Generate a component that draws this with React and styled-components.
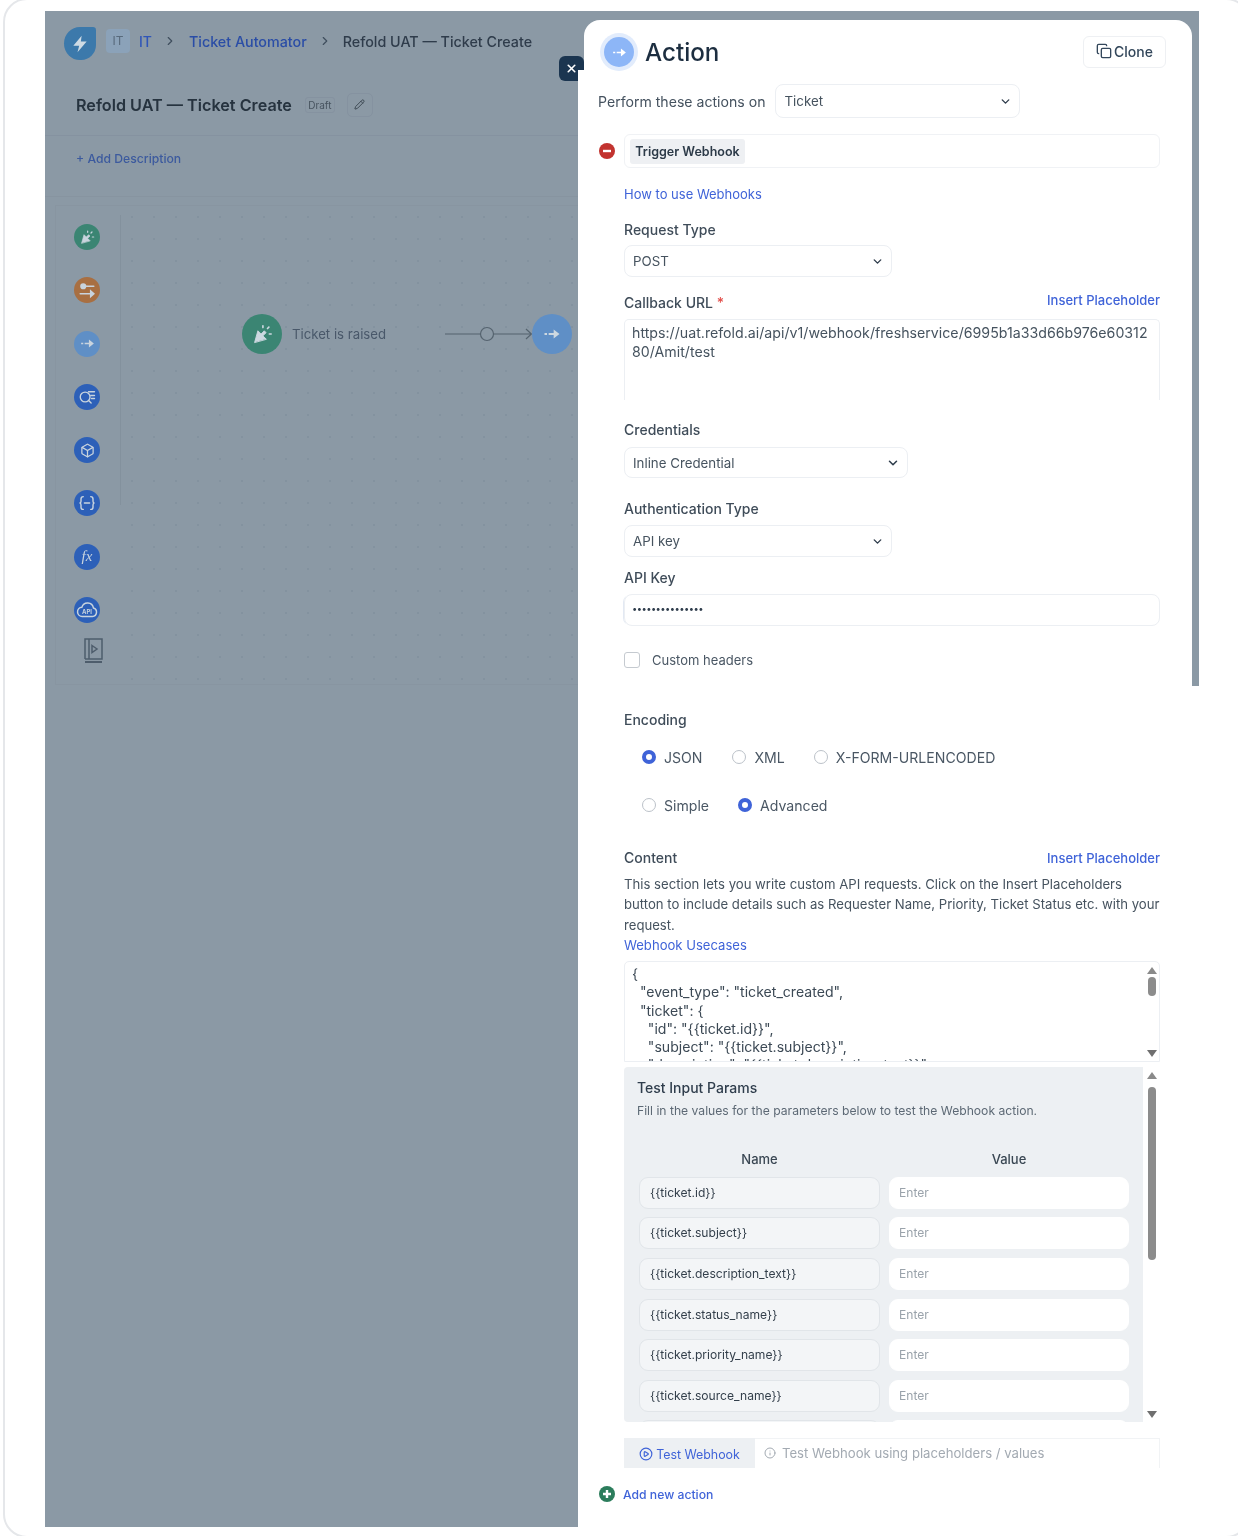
import { Fragment } from 'react';
import styled, { createGlobalStyle } from 'styled-components';
import {
  Box,
  ChevronDown,
  ChevronRight,
  CirclePlay,
  Copy,
  Info,
  Pencil,
  X,
} from 'lucide-react';

const GlobalStyle = createGlobalStyle`
  html, body {
    margin: 0;
    overflow: hidden;
    background: #fff;
  }
  body {
    font-family: Inter, "Liberation Sans", sans-serif;
    color: #2f3d4c;
  }
  * {
    box-sizing: border-box;
  }
`;

const BLUE = '#3f63d8';
const DIM = '#8b99a5';

// outer frame
const Frame = styled.div`
  width: 1247px;
  height: 1540px;
  margin: -2px 0 0 3px;
  padding: 11px 0 0 40px;
  border: 2px solid #e5e7ea;
  border-radius: 24px;
  filter: blur(0.4px);
`;
const Stage = styled.div`
  display: grid;
  grid-template-columns: 533px 621px;
  width: 1154px;
  height: 1516px;
`;

// left side
const LeftPane = styled.div`
  background: ${DIM};
  overflow: hidden;
`;
const Breadcrumbs = styled.div`
  display: flex;
  align-items: center;
  height: 33px;
  margin: 16px 0 0 19px;
  font-size: 14px;
  font-weight: 500;
`;
const Logo = styled.div`
  display: flex;
  align-items: center;
  justify-content: center;
  width: 32px;
  height: 33px;
  margin-right: 10px;
  background: #3c79ab;
  border-radius: 50% 10% 46% 50%;
`;
const Tile = styled.div`
  display: flex;
  align-items: center;
  justify-content: center;
  width: 24px;
  height: 24px;
  margin: 0 9px 6px 0;
  border-radius: 4px;
  background: #8ba2b9;
  color: #586a7c;
  font-size: 12px;
  font-weight: 400;
`;
const Crumb = styled.span`
  margin-bottom: 5px;
  font-size: ${p => p.$size || 14}px;
  color: ${p => p.$color};
  white-space: nowrap;
`;
const CrumbArrow = styled.span`
  display: flex;
  width: 14px;
  margin: 0 ${p => p.$right}px 5px ${p => p.$left}px;
  color: #3f4e5e;
`;
const TitleBlock = styled.div`
  display: flex;
  align-items: center;
  height: 43px;
  margin-top: 33px;
  padding: 0 0 19px 31px;
  border-bottom: 1px solid #8592a0;
`;
const PageTitle = styled.h1`
  margin: 0 13px 0 0;
  font-size: 16.2px;
  font-weight: 600;
  color: #26333f;
  white-space: nowrap;
`;
const Draft = styled.span`
  display: flex;
  align-items: center;
  justify-content: center;
  width: 30px;
  height: 16px;
  margin-right: 12px;
  border: 1px solid #8592a0;
  border-radius: 3px;
  font-size: 10px;
  color: #47535f;
`;
const EditButton = styled.span`
  display: flex;
  align-items: center;
  justify-content: center;
  width: 26px;
  height: 24px;
  border: 1px solid #8592a0;
  border-radius: 5px;
  color: #39454f;
`;
const Description = styled.div`
  height: 61px;
  padding: 14px 0 0 31px;
  border-bottom: 1px solid #8794a0;
  font-size: 12.2px;
  line-height: 18px;
  font-weight: 500;
  color: #3c5a9e;
`;
const Canvas = styled.div`
  display: flex;
  height: 480px;
  margin: 8px 0 0 10px;
  border: 1px solid #8895a1;
  border-right: 0;
`;
const Sidebar = styled.div`
  display: flex;
  flex-direction: column;
  gap: 27.3px;
  width: 64px;
  padding: 18px 0 0 18px;
`;
const SideRule = styled.div`
  width: 1px;
  height: 290px;
  margin-top: 9px;
  background: #83919d;
`;
const SideIcon = styled.div`
  display: flex;
  align-items: center;
  justify-content: center;
  width: 26px;
  height: 26px;
  border-radius: 50%;
  background: ${p => p.$bg};
  color: #c9d4de;
  font-size: 13px;
`;
const FxLabel = styled.span`
  font-family: "Liberation Serif", serif;
  font-style: italic;
  font-size: 15px;
  line-height: 1;
`;
const BookIcon = styled.div`
  display: flex;
  margin: -14px 0 0 8px;
  color: #4e5d6c;
`;
const Flow = styled.div`
  flex: 1;
  display: flex;
  align-items: flex-start;
  padding: 108px 0 0 121px;
  background-image: radial-gradient(#83929f 1px, transparent 1.2px);
  background-size: 22px 22px;
`;
const FlowNode = styled.div`
  flex: none;
  display: flex;
  align-items: center;
  justify-content: center;
  width: 40px;
  height: 40px;
  border-radius: 50%;
  background: ${p => p.$bg};
  color: #cdd8e0;
`;
const FlowLabel = styled.span`
  flex: none;
  width: 93px;
  margin: 0 60px 0 10px;
  font-size: 13.2px;
  line-height: 40px;
  color: #49586a;
  white-space: nowrap;
`;
const Connector = styled.svg`
  flex: none;
  display: block;
  margin-top: 12px;
`;

// right side
const RightColumn = styled.div`
  position: relative;
  padding: 9px 7px 0 6px;
  background: linear-gradient(${DIM}, ${DIM}) 0 0 / 100% 675px no-repeat, #fff;
  &::before {
    content: '';
    position: absolute;
    z-index: 2;
    left: 0;
    top: 59px;
    bottom: 0;
    width: 6px;
    background: #fff;
  }
`;
const CloseButton = styled.div`
  position: absolute;
  z-index: 1;
  left: -19px;
  top: 45px;
  display: flex;
  align-items: center;
  justify-content: center;
  width: 25px;
  height: 25px;
  border-radius: 6px;
  background: #1b3550;
  color: #fff;
`;
const Panel = styled.div`
  position: relative;
  z-index: 3;
  height: 1507px;
  padding: 16px 26px 0 14px;
  background: #fff;
  border-radius: 16px 16px 0 0;
`;
const PanelHeader = styled.div`
  display: flex;
  align-items: center;
  height: 32px;
`;
const ActionBadge = styled.div`
  display: flex;
  align-items: center;
  justify-content: center;
  width: 30px;
  height: 30px;
  margin: 0 11px 0 6px;
  border-radius: 50%;
  background: #8db6f7;
  box-shadow: 0 0 0 4px #e2ecfc;
  color: #fff;
`;
const PanelTitle = styled.h2`
  flex: 1;
  margin: 0;
  font-size: 24.2px;
  font-weight: 500;
  color: #1d2e40;
`;
const CloneButton = styled.div`
  display: flex;
  align-items: center;
  justify-content: center;
  gap: 2px;
  width: 83px;
  height: 32px;
  padding-bottom: 2px;
  border: 1px solid #eef0f3;
  border-radius: 6px;
  font-size: 14px;
  font-weight: 500;
  color: #33475b;
`;
const PerformRow = styled.div`
  display: flex;
  align-items: center;
  gap: 9px;
  margin-top: 16px;
  font-size: 14.1px;
  color: #45525f;
`;
const Select = styled.div`
  display: flex;
  align-items: center;
  justify-content: space-between;
  width: ${p => p.$width}px;
  height: ${p => p.$height || 32}px;
  margin-top: ${p => p.$mt || 0}px;
  padding: 0 ${p => p.$pr || 10}px 0 ${p => p.$pl || 8}px;
  border: 1px solid #eceff3;
  border-radius: 8px;
  font-size: 13.3px;
  color: #46535f;
  svg {
    color: #2f3d4c;
  }
`;
const ActionRow = styled.div`
  display: flex;
  align-items: center;
  gap: 9px;
  margin: 16px 6px 0 1px;
`;
const ActionField = styled.div`
  flex: 1;
  display: flex;
  align-items: center;
  height: 34px;
  padding-left: 5px;
  border: 1px solid #f0f2f5;
  border-radius: 6px;
`;
const Chip = styled.span`
  display: flex;
  align-items: center;
  justify-content: center;
  width: 115px;
  height: 25px;
  border-radius: 3px;
  background: #eef0f3;
  font-size: 12.5px;
  font-weight: 600;
  color: #2c3a48;
`;
const ActionBody = styled.div`
  width: 536px;
  margin-left: 26px;
`;
const LinkLine = styled.div`
  margin-top: ${p => p.$mt || 0}px;
  font-size: ${p => p.$size || 13}px;
  line-height: ${p => p.$lh || 16}px;
  color: ${BLUE};
`;
const Label = styled.div`
  margin-top: ${p => p.$mt}px;
  font-size: 14px;
  line-height: 18px;
  font-weight: 450;
  color: #3f4c59;
`;
const LabelRow = styled.div`
  display: flex;
  justify-content: space-between;
  margin-top: ${p => p.$mt}px;
  font-size: 14px;
  line-height: 18px;
  font-weight: 450;
  color: #3f4c59;
`;
const Required = styled.span`
  color: #e2504c;
`;
const Placeholder = styled.span`
  margin-top: ${p => p.$up || 0}px;
  font-size: 13px;
  color: ${BLUE};
`;
const UrlBox = styled.div`
  height: 81px;
  margin-top: 7px;
  padding: 4px 8px 4px 7px;
  border: 1px solid #eceff3;
  border-bottom: 0;
  border-radius: 5px 5px 0 0;
  font-size: 14.2px;
  line-height: 18.6px;
  color: #46535f;
  word-break: break-all;
`;
const SecretInput = styled.div`
  height: 32px;
  margin-top: 7px;
  padding-left: 7px;
  border: 1px solid #eceff3;
  border-radius: 8px;
  box-shadow: -2px 0 0 -1px #e3e9f3;
  font-size: 9.4px;
  line-height: 28px;
  letter-spacing: -0.55px;
  color: #2f3d4c;
`;
const CheckRow = styled.div`
  display: flex;
  align-items: center;
  gap: 12px;
  height: 16px;
  margin-top: 26px;
  font-size: 13px;
  color: #4a5764;
`;
const CheckBox = styled.span`
  width: 16px;
  height: 16px;
  border: 1px solid #c5cad0;
  border-radius: 3px;
`;
const RadioRow = styled.div`
  display: flex;
  align-items: center;
  height: 18px;
  margin: ${p => p.$mt}px 0 0 18px;
  font-size: 14.1px;
  color: #4a5764;
`;
const Radio = styled.span`
  flex: none;
  width: 14px;
  height: 14px;
  margin-right: 8px;
  border-radius: 50%;
  border: ${p => (p.$on ? `4px solid ${BLUE}` : '1px solid #bcc2c9')};
`;
const RadioText = styled.span`
  margin-right: ${p => p.$gap}px;
  white-space: nowrap;
`;
const HelpText = styled.p`
  margin: 7px 0 0;
  font-size: 13.15px;
  line-height: 20.4px;
  color: #46535f;
  white-space: nowrap;
`;
const CodeBox = styled.div`
  display: flex;
  height: 101px;
  margin-top: 6px;
  border: 1px solid #eceff3;
  border-radius: 5px 5px 0 0;
  overflow: hidden;
`;
const Code = styled.pre`
  flex: 1;
  margin: 0;
  padding: 3px 7px;
  font-family: Inter, "Liberation Sans", sans-serif;
  font-size: 14.1px;
  line-height: 18.2px;
  color: #3c4955;
`;
const Track = styled.div`
  flex: none;
  display: flex;
  flex-direction: column;
  align-items: center;
  justify-content: space-between;
  width: ${p => p.$width}px;
  padding: 5px 0 4px;
`;
const ArrowUp = styled.span`
  width: 0;
  height: 0;
  border: 5px solid transparent;
  border-top: 0;
  border-bottom: 7px solid #8a8a8a;
`;
const ArrowDown = styled(ArrowUp)`
  border-bottom: 0;
  border-top: 7px solid #6f6f6f;
`;
const TrackMiddle = styled.div`
  flex: 1;
  padding-top: ${p => p.$top}px;
`;
const Thumb = styled.div`
  width: 8px;
  height: ${p => p.$height}px;
  border-radius: 4px;
  background: #8c8c8c;
`;
const TestPanel = styled.div`
  display: flex;
  height: 355px;
  margin-top: 5px;
  overflow: hidden;
`;
const TestBody = styled.div`
  flex: none;
  width: 519px;
  padding: 11px 0 0 13px;
  background: #edf0f3;
  border-radius: 4px 0 0 4px;
`;
const TestTitle = styled.div`
  font-size: 14px;
  line-height: 20px;
  font-weight: 500;
  color: #2f3d4c;
`;
const TestSub = styled.div`
  margin-top: 5px;
  font-size: 12.15px;
  line-height: 16px;
  color: #5d6975;
`;
const ParamGrid = styled.div`
  display: grid;
  grid-template-columns: 241px 240px;
  grid-template-rows: 18px;
  grid-auto-rows: 32px;
  column-gap: 9px;
  row-gap: 8.6px;
  margin: 31px 0 0 2px;
`;
const ParamHead = styled.div`
  text-align: center;
  font-size: 13px;
  line-height: 18px;
  font-weight: 500;
  color: #3a4753;
`;
const ParamCell = styled.div`
  height: 32px;
  padding-left: ${p => (p.$name ? 10 : 9)}px;
  border-radius: 9px;
  border: 1px solid ${p => (p.$name ? '#e1e5e9' : '#fff')};
  background: ${p => (p.$name ? '#f3f5f7' : '#fff')};
  font-size: 12.1px;
  line-height: 30px;
  color: ${p => (p.$name ? '#333f4b' : '#9aa3ab')};
  white-space: nowrap;
`;
const TestBar = styled.div`
  display: flex;
  height: 30px;
  margin-top: 16px;
  border: 1px solid #f1f3f5;
  border-bottom: 0;
`;
const TestButton = styled.div`
  display: flex;
  align-items: center;
  justify-content: center;
  gap: 3px;
  width: 131px;
  margin: -1px 0 0 -1px;
  padding-top: 2px;
  background: #edf0f3;
  font-size: 12.4px;
  color: ${BLUE};
`;
const TestHint = styled.div`
  display: flex;
  align-items: center;
  gap: 6px;
  margin: -2px 0 0 9px;
  font-size: 13.15px;
  color: #a3aab2;
`;
const AddRow = styled.div`
  display: flex;
  align-items: center;
  gap: 8px;
  height: 18px;
  margin: 17px 0 0 1px;
  font-size: 12.2px;
  font-weight: 500;
  color: ${BLUE};
`;

const ClickIcon = ({ size }) => (
  <svg width={size} height={size} viewBox='0 0 24 24' fill='none' stroke='currentColor' strokeWidth='1.8' strokeLinecap='round'>
    <path d='M4 21 7.500 8.500 11 12l3.500-3.500 2 2L13 14l3.500 3.500Z' fill='currentColor' strokeWidth='1' strokeLinejoin='round' />
    <path d='M13 5V3M20 12h2M18 6l1.500-1.500' />
  </svg>
);
const TuneIcon = () => (
  <svg width='18' height='18' viewBox='0 0 24 24' fill='none' stroke='currentColor' strokeWidth='2.2' strokeLinecap='round'>
    <circle cx='7' cy='7' r='3' fill='currentColor' />
    <path d='M11 7h10M3 17h15' />
    <path d='m17 13.500 4 3.500-4 3.500Z' fill='currentColor' />
  </svg>
);
const ForwardIcon = ({ size }) => (
  <svg width={size} height={size} viewBox='0 0 24 24' fill='currentColor'>
    <path d='M3 10.800h3v2.400H3ZM8 10.800h6V6.500l7 5.500-7 5.500v-4.300H8Z' />
  </svg>
);
const SearchListIcon = () => (
  <svg width='18' height='18' viewBox='0 0 24 24' fill='none' stroke='currentColor' strokeWidth='1.8' strokeLinecap='round'>
    <circle cx='9.500' cy='12' r='6.500' />
    <path d='m14.500 17 3 3M14 5h8M17 10h5M18 14h4' />
  </svg>
);
const BracesIcon = () => (
  <svg width='18' height='18' viewBox='0 0 24 24' fill='none' stroke='currentColor' strokeWidth='1.9' strokeLinecap='round'>
    <path d='M7 3.500c-2 0-3 1-3 3v3c0 1.300-.7 2.500-2 2.500 1.300 0 2 1.200 2 2.500v3c0 2 1 3 3 3M17 3.500c2 0 3 1 3 3v3c0 1.300.7 2.500 2 2.500-1.300 0-2 1.200-2 2.500v3c0 2-1 3-3 3M8.500 12h7' />
  </svg>
);
const ApiCloudIcon = () => (
  <svg width='22' height='22' viewBox='0 0 24 24' fill='none' stroke='currentColor' strokeWidth='1.6'>
    <path d='M7 19a5 5 0 0 1-.6-10A6.500 6.500 0 0 1 19 9.800 4.700 4.700 0 0 1 18 19Z' />
    <text x='12' y='16.500' fontSize='6.500' fontWeight='700' textAnchor='middle' fill='currentColor' stroke='none'>API</text>
  </svg>
);
const BookPlayIcon = () => (
  <svg width='24' height='28' viewBox='0 0 24 28' fill='none' stroke='currentColor' strokeWidth='1.5'>
    <path d='M3 23V3h17v20H3M7 3v20' />
    <path d='M10 9.500 15 13l-5 3.500Z' />
    <path d='M3 26h17' strokeWidth='2' />
  </svg>
);
const RoundSign = ({ bg, plus }) => (
  <svg width='16' height='16' viewBox='0 0 16 16' style={{ flex: 'none' }}>
    <circle cx='8' cy='8' r='8' fill={bg} />
    <path d={plus ? 'M8 4v8M4 8h8' : 'M4 8h8'} stroke='#fff' strokeWidth='2.4' />
  </svg>
);

const CODE = `{
  "event_type": "ticket_created",
  "ticket": {
    "id": "{{ticket.id}}",
    "subject": "{{ticket.subject}}",
    "description": "{{ticket.description_text}}"`;

const PARAMS = [
  '{{ticket.id}}',
  '{{ticket.subject}}',
  '{{ticket.description_text}}',
  '{{ticket.status_name}}',
  '{{ticket.priority_name}}',
  '{{ticket.source_name}}',
  '',
];

const App = () => {
  return (
    <Frame>
      <GlobalStyle />
      <Stage>
        <LeftPane>
          <Breadcrumbs>
            <Logo>
              <svg width='20' height='20' viewBox='0 0 24 24' fill='#cfdbe4'>
                <path d='M14 2 4 14h7l-2 8 11-13h-7Z' />
              </svg>
            </Logo>
            <Tile>IT</Tile>
            <Crumb $color='#2f55b8'>IT</Crumb>
            <CrumbArrow $left={11} $right={12}><ChevronRight size={14} /></CrumbArrow>
            <Crumb $color='#2a4da6' $size={14.3}>Ticket Automator</Crumb>
            <CrumbArrow $left={11} $right={11}><ChevronRight size={14} /></CrumbArrow>
            <Crumb $color='#2f3c4b' $size={14.3}>Refold UAT — Ticket Create</Crumb>
          </Breadcrumbs>
          <TitleBlock>
            <PageTitle>Refold UAT — Ticket Create</PageTitle>
            <Draft>Draft</Draft>
            <EditButton><Pencil size={11} /></EditButton>
          </TitleBlock>
          <Description>+ Add Description</Description>
          <Canvas>
            <Sidebar>
              <SideIcon $bg='#3b8573'><ClickIcon size={16} /></SideIcon>
              <SideIcon $bg='#a86f42'><TuneIcon /></SideIcon>
              <SideIcon $bg='#5f8fc6'><ForwardIcon size={17} /></SideIcon>
              <SideIcon $bg='#2d60b8'><SearchListIcon /></SideIcon>
              <SideIcon $bg='#2d60b8'><Box size={15} /></SideIcon>
              <SideIcon $bg='#2d60b8'><BracesIcon /></SideIcon>
              <SideIcon $bg='#2d60b8'><FxLabel>fx</FxLabel></SideIcon>
              <SideIcon $bg='#2d60b8'><ApiCloudIcon /></SideIcon>
              <BookIcon><BookPlayIcon /></BookIcon>
            </Sidebar>
            <SideRule />
            <Flow>
              <FlowNode $bg='#3b8573'><ClickIcon size={22} /></FlowNode>
              <FlowLabel>Ticket is raised</FlowLabel>
              <Connector width='87' height='16' viewBox='0 0 87 16' fill='none' stroke='#55636f' strokeWidth='1.2'>
                <path d='M0 8h35M49 8h37M81 3l5.500 5-5.500 5' />
                <circle cx='42' cy='8' r='6.500' />
              </Connector>
              <FlowNode $bg='#5f8fc6'><ForwardIcon size={20} /></FlowNode>
            </Flow>
          </Canvas>
        </LeftPane>

        <RightColumn>
          <CloseButton><X size={13} strokeWidth={3} /></CloseButton>
          <Panel>
            <PanelHeader>
              <ActionBadge><ForwardIcon size={17} /></ActionBadge>
              <PanelTitle>Action</PanelTitle>
              <CloneButton><Copy size={16} />Clone</CloneButton>
            </PanelHeader>
            <PerformRow>
              Perform these actions on
              <Select $width={245} $height={34} $pl={9} $pr={7}>Ticket<ChevronDown size={13} strokeWidth={2.6} /></Select>
            </PerformRow>
            <ActionRow>
              <RoundSign bg='#c2332f' />
              <ActionField><Chip>Trigger Webhook</Chip></ActionField>
            </ActionRow>
            <ActionBody>
              <LinkLine $mt={18}>How to use Webhooks</LinkLine>
              <Label $mt={19}>Request Type</Label>
              <Select $width={268} $mt={6} $pr={7}>POST<ChevronDown size={13} strokeWidth={2.6} /></Select>
              <LabelRow $mt={17}>
                <span>Callback URL <Required>*</Required></span>
                <Placeholder $up={-3}>Insert Placeholder</Placeholder>
              </LabelRow>
              <UrlBox>https://uat.refold.ai/api/v1/webhook/freshservice/6995b1a33d66b976e6031280/Amit/test</UrlBox>
              <Label $mt={21}>Credentials</Label>
              <Select $width={284} $height={31} $mt={8} $pr={7}>Inline Credential<ChevronDown size={14} strokeWidth={2.6} /></Select>
              <Label $mt={22}>Authentication Type</Label>
              <Select $width={268} $mt={7} $pr={7}>API key<ChevronDown size={13} strokeWidth={2.6} /></Select>
              <Label $mt={12}>API Key</Label>
              <SecretInput>•••••••••••••••</SecretInput>
              <CheckRow><CheckBox />Custom headers</CheckRow>
              <Label $mt={43}>Encoding</Label>
              <RadioRow $mt={19}>
                <Radio $on /><RadioText $gap={30}>JSON</RadioText>
                <Radio /><RadioText $gap={29}>XML</RadioText>
                <Radio /><RadioText $gap={0}>X-FORM-URLENCODED</RadioText>
              </RadioRow>
              <RadioRow $mt={30}>
                <Radio /><RadioText $gap={29}>Simple</RadioText>
                <Radio $on /><RadioText $gap={0}>Advanced</RadioText>
              </RadioRow>
              <LabelRow $mt={35}>
                <span>Content</span>
                <Placeholder>Insert Placeholder</Placeholder>
              </LabelRow>
              <HelpText>
                This section lets you write custom API requests. Click on the Insert Placeholders
                <br />
                button to include details such as Requester Name, Priority, Ticket Status etc. with your
                <br />
                request.
              </HelpText>
              <LinkLine $size={13.1} $lh={20}>Webhook Usecases</LinkLine>
              <CodeBox>
                <Code>{CODE}</Code>
                <Track $width={15}>
                  <ArrowUp />
                  <TrackMiddle $top={3}><Thumb $height={19} /></TrackMiddle>
                  <ArrowDown />
                </Track>
              </CodeBox>
              <TestPanel>
                <TestBody>
                  <TestTitle>Test Input Params</TestTitle>
                  <TestSub>Fill in the values for the parameters below to test the Webhook action.</TestSub>
                  <ParamGrid>
                    <ParamHead>Name</ParamHead>
                    <ParamHead>Value</ParamHead>
                    {PARAMS.map((name, i) => (
                      <Fragment key={i}>
                        <ParamCell $name>{name}</ParamCell>
                        <ParamCell>{name && 'Enter'}</ParamCell>
                      </Fragment>
                    ))}
                  </ParamGrid>
                </TestBody>
                <Track $width={17}>
                  <ArrowUp />
                  <TrackMiddle $top={8}><Thumb $height={173} /></TrackMiddle>
                  <ArrowDown />
                </Track>
              </TestPanel>
              <TestBar>
                <TestButton><CirclePlay size={14} />Test Webhook</TestButton>
                <TestHint><Info size={12} />Test Webhook using placeholders / values</TestHint>
              </TestBar>
            </ActionBody>
            <AddRow>
              <RoundSign bg='#2c7d5c' plus />
              Add new action
            </AddRow>
          </Panel>
        </RightColumn>
      </Stage>
    </Frame>
  );
};

export default App;
